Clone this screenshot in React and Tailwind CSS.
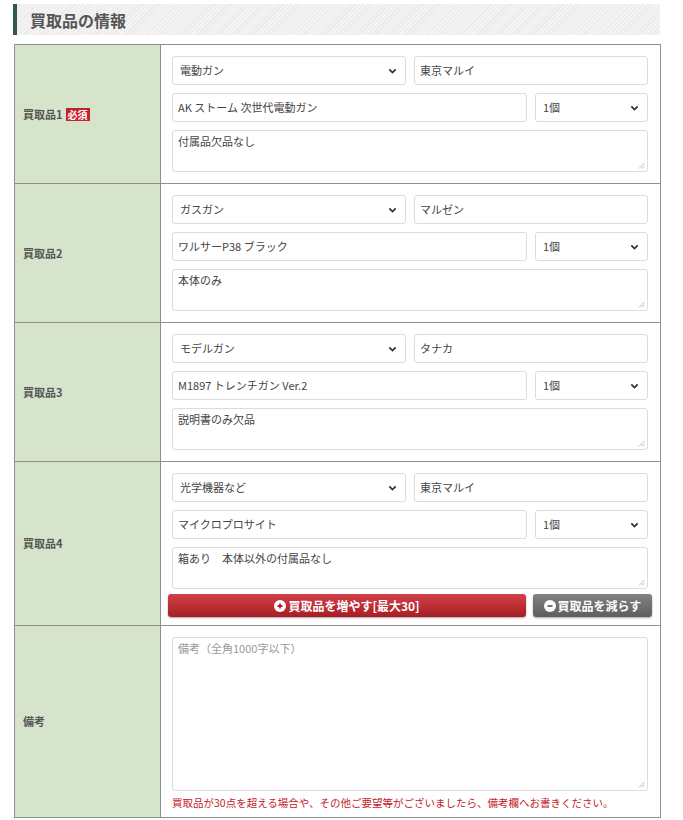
import React from 'react';

const font = { fontFamily: '"Noto Sans CJK JP", "Liberation Sans", sans-serif' };

const items = [
  { label: '買取品1', required: true, cat: '電動ガン', maker: '東京マルイ', name: 'AK ストーム 次世代電動ガン', note: '付属品欠品なし' },
  { label: '買取品2', cat: 'ガスガン', maker: 'マルゼン', name: 'ワルサーP38 ブラック', note: '本体のみ' },
  { label: '買取品3', cat: 'モデルガン', maker: 'タナカ', name: 'M1897 トレンチガン Ver.2', note: '説明書のみ欠品' },
  { label: '買取品4', cat: '光学機器など', maker: '東京マルイ', name: 'マイクロプロサイト', note: '箱あり　本体以外の付属品なし', buttons: true },
];

function Chevron() {
  return (
    <svg width="9" height="9" viewBox="0 0 10 10" className="absolute right-[8px] top-1/2 -translate-y-1/2">
      <path d="M1.5 3.2 L5 6.7 L8.5 3.2" fill="none" stroke="#333" strokeWidth="2" />
    </svg>
  );
}

function Select({ value }) {
  return (
    <div className="relative h-[29px] rounded-[3px] border border-[#dcdcdc] bg-white">
      <div className="flex h-full items-center pl-[7px] text-[11px] text-[#444]">{value}</div>
      <Chevron />
    </div>
  );
}

function Input({ value }) {
  return (
    <div className="flex h-[29px] items-center rounded-[3px] border border-[#dcdcdc] bg-white pl-[5px] text-[11px] text-[#444]">
      {value}
    </div>
  );
}

function Textarea({ value, placeholder, h }) {
  return (
    <div className={`relative rounded-[3px] border border-[#dcdcdc] bg-white px-[5px] pt-[2px] text-[11px] ${h}`}>
      {value ? <span className="text-[#444]">{value}</span> : <span className="text-[#999]">{placeholder}</span>}
      <svg width="7" height="7" viewBox="0 0 7 7" className="absolute bottom-[2px] right-[2px]">
        <path d="M6.5 1 L1 6.5 M6.5 4 L4 6.5" stroke="#aaa" strokeWidth="0.8" />
      </svg>
    </div>
  );
}

function Circle({ sign }) {
  return (
    <span className="mr-[2px] inline-flex h-[12px] w-[12px] items-center justify-center rounded-full bg-white">
      <svg width="8" height="8" viewBox="0 0 8 8">
        <path d={sign === '+' ? 'M1.5 4 H6.5 M4 1.5 V6.5' : 'M1.5 4 H6.5'} stroke={sign === '+' ? '#b3242c' : '#666'} strokeWidth="1.8" />
      </svg>
    </span>
  );
}

export default function App() {
  return (
    <div className="min-h-[820px] bg-white pt-[4px]" style={font}>
      <div className="ml-[13px] mr-[23px] flex h-[31px] items-center border-l-[4px] border-[#2f5d45] bg-[repeating-linear-gradient(135deg,#f4f4f4_0px,#f4f4f4_2px,#e9e9e9_2px,#e9e9e9_3px)] pl-[13px]">
        <h2 className="text-[16px] font-bold text-[#555]">買取品の情報</h2>
      </div>

      <div className="ml-[14px] mr-[22px] mt-[9px] border border-[#8f8f8f]">
        {items.map((it) => (
          <div key={it.label} className="grid grid-cols-[146px_1fr] border-b border-[#8f8f8f]">
            <div className="flex items-center border-r border-[#8f8f8f] bg-[#d5e4cb] pl-[8px] text-[11px] font-bold text-[#555]">
              {it.label}
              {it.required && (
                <span className="ml-[3px] bg-[#c4222b] px-[2px] text-[10px] leading-[13px] text-white">必須</span>
              )}
            </div>
            <div className={`flex flex-col gap-[8px] pl-[11px] pr-[12px] pt-[11px] ${it.buttons ? 'pb-[8px]' : 'pb-[11px]'}`}>
              <div className="grid grid-cols-2 gap-[8px]">
                <Select value={it.cat} />
                <Input value={it.maker} />
              </div>
              <div className="grid grid-cols-[1fr_113px] gap-[8px]">
                <Input value={it.name} />
                <Select value="1個" />
              </div>
              <Textarea value={it.note} h="h-[42px]" />
              {it.buttons && (
                <div className="-mx-[4px] -mt-[3px] flex gap-[7px]">
                  <button className="flex h-[23px] flex-1 items-center justify-center rounded-[3px] bg-gradient-to-b from-[#d2414a] to-[#a81c25] text-[12px] font-bold text-white shadow-[0_1px_2px_rgba(0,0,0,0.35)]">
                    <Circle sign="+" />買取品を増やす[最大30]
                  </button>
                  <button className="flex h-[23px] w-[119px] items-center justify-center rounded-[3px] bg-gradient-to-b from-[#828282] to-[#5e5e5e] text-[12px] font-bold text-white shadow-[0_1px_2px_rgba(0,0,0,0.35)]">
                    <Circle sign="-" />買取品を減らす
                  </button>
                </div>
              )}
            </div>
          </div>
        ))}
        <div className="grid grid-cols-[146px_1fr]">
          <div className="flex items-center border-r border-[#8f8f8f] bg-[#d5e4cb] pl-[8px] text-[11px] font-bold text-[#555]">
            備考
          </div>
          <div className="flex flex-col pb-[7px] pl-[11px] pr-[12px] pt-[11px]">
            <Textarea placeholder="備考（全角1000字以下）" h="h-[154px]" />
            <p className="mt-[5px] text-[10.5px] leading-[14px] text-[#c4222b]">
              買取品が30点を超える場合や、その他ご要望等がございましたら、備考欄へお書きください。
            </p>
          </div>
        </div>
      </div>
    </div>
  );
}
